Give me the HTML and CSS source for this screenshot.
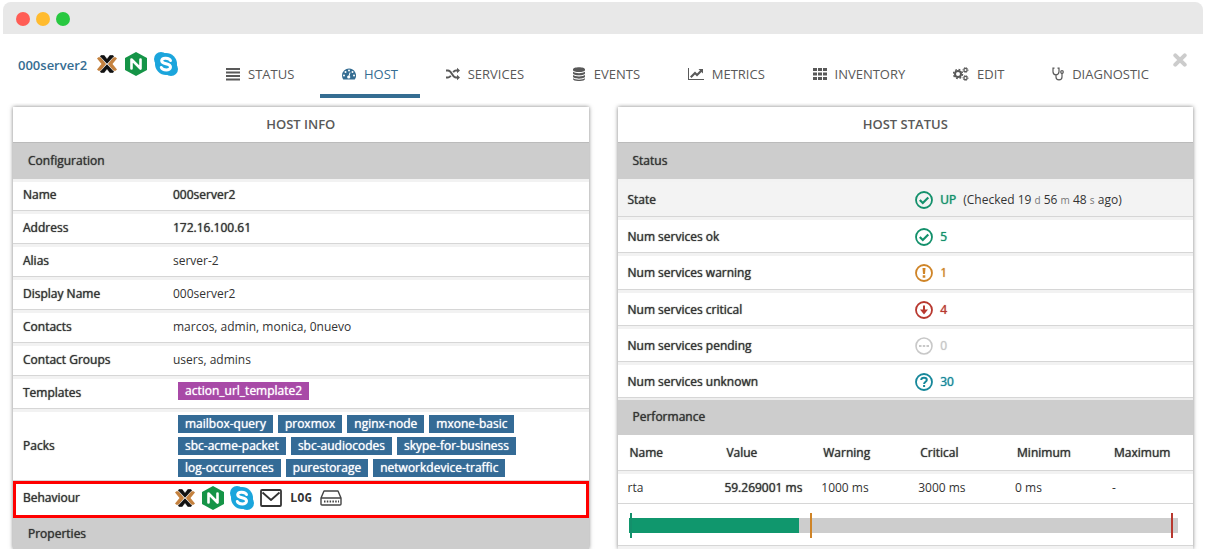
FILE: index.html
```html
<!DOCTYPE html>
<html lang="en">
<head>
<meta charset="utf-8">
<title>000server2 - Host</title>
<link rel="stylesheet" href="styles.css">
</head>
<body>
<svg class="sprite" aria-hidden="true">
  <symbol id="proxmox" viewBox="0 0 22 22">
    <path fill="#c5823f" d="M0 5l1.500-1.500h2.500L10 11l-6 7.500H1.500L0 17l5-6zM22 5l-1.500-1.500h-2.500L12 11l6 7.500h2.500L22 17l-5-6z"/>
    <path fill="#111" stroke="#fff" stroke-width=".5" d="M3 2.500L4.500 1h3.500l3 4 3-4h3.500L19 2.500l-8 8.500zM3 19.500L4.500 21h3.500l3-4 3 4h3.500l1.500-1.500L11 11z"/>
  </symbol>
  <symbol id="nginx" viewBox="0 0 22 24">
    <path fill="#159447" d="M11 0l11 6v12l-11 6L0 18V6z"/>
    <path fill="none" stroke="#fff" stroke-width="2.600" stroke-linecap="round" stroke-linejoin="round" d="M6.500 16.500v-9l9 9v-9"/>
  </symbol>
  <symbol id="skype" viewBox="0 0 24 24">
    <circle cx="12" cy="12" r="11" fill="#1ba5dc"/><circle cx="7" cy="7" r="7" fill="#1ba5dc"/><circle cx="17" cy="17" r="7" fill="#1ba5dc"/>
    <path fill="none" stroke="#fff" stroke-width="3" stroke-linecap="round" d="M16.500 8.500C15.500 6 8 4.800 7.700 8.700c0 4 8.800 2.200 8.800 6.300 0 4.200-8 3.500-9.200.5"/>
  </symbol>
  <symbol id="bars" viewBox="0 0 14 14"><path fill="currentColor" d="M0 1h14v2H0zM0 4.500h14v2H0zM0 8h14v2H0zM0 11.500h14v2H0z"/></symbol>
  <symbol id="gauge" viewBox="0 0 14 14">
    <path fill="currentColor" d="M7 1.500a7 7 0 0 0-7 7c0 1.400.4 2.700 1.100 3.800.2.200.3.200.5.200h10.800c.2 0 .400 0 .5-.2A7 7 0 0 0 7 1.500z"/>
    <g fill="#fff"><circle cx="2" cy="8.500" r="1"/><circle cx="3.500" cy="5" r="1"/><circle cx="7" cy="3.500" r="1"/><circle cx="10.500" cy="5" r="1"/><circle cx="12" cy="8.500" r="1"/><circle cx="6.700" cy="10" r="1.600"/></g>
    <path stroke="#fff" stroke-width="1" d="M6.800 10l1.200-4.500"/>
  </symbol>
  <symbol id="shuffle" viewBox="0 0 14 14">
    <path fill="none" stroke="currentColor" stroke-width="1.900" d="M0 3.500h2C6 3.500 6 10.500 10 10.500h2M0 10.500h2c1.300 0 2.100-.7 2.800-1.700M7.200 5.200C7.900 4.200 8.700 3.500 10 3.500h2"/>
    <path fill="currentColor" d="M11 .7L14 3.500l-3 2.800zM11 7.700l3 2.800-3 2.800z"/>
  </symbol>
  <symbol id="database" viewBox="0 0 14 14">
    <path fill="currentColor" d="M1 2.300C1-.6 13-.6 13 2.300v.7C13 5.700 1 5.700 1 3zM1 4.700c2 1.900 10 1.900 12 0v1.600C13 9 1 9 1 6.300zM1 8c2 1.900 10 1.900 12 0v1.600c0 2.700-12 2.700-12 0zM1 11.200c2 1.900 10 1.900 12 0V12c0 2.700-12 2.700-12 0z"/>
  </symbol>
  <symbol id="chart" viewBox="0 0 16 14">
    <path fill="currentColor" d="M0 1h1v11h15v1H0zM10.500 2H15v4.500l-1.500-1.500L9 9.500l-2-2-3.500 3.500L2 9.500l5-5 2 2 3-3z"/>
  </symbol>
  <symbol id="grid" viewBox="0 0 14 14">
    <path fill="currentColor" d="M0 1h4v3H0zM5 1h4v3H5zM10 1h4v3h-4zM0 5.500h4v3H0zM5 5.500h4v3H5zM10 5.500h4v3h-4zM0 10h4v3H0zM5 10h4v3H5zM10 10h4v3h-4z"/>
  </symbol>
  <symbol id="gears" viewBox="0 0 16 14">
    <g fill="none" stroke="currentColor">
      <circle cx="5" cy="7" r="3" stroke-width="2"/><circle cx="5" cy="7" r="4.500" stroke-width="1.500" stroke-dasharray="1.770 1.770"/>
      <circle cx="12.500" cy="3" r="1.600" stroke-width="1.200"/><circle cx="12.500" cy="3" r="2.500" stroke-width="1" stroke-dasharray="1 .960"/>
      <circle cx="12.500" cy="11" r="1.600" stroke-width="1.200"/><circle cx="12.500" cy="11" r="2.500" stroke-width="1" stroke-dasharray="1 .960"/>
    </g>
  </symbol>
  <symbol id="stethoscope" viewBox="0 0 12 14">
    <path fill="none" stroke="currentColor" stroke-width="1.200" d="M2.500 1.200H1v3.600c0 4 6 4 6 0V1.200H5.500M4 8v2c0 3.800 6 3.800 6 0V6"/>
    <circle cx="10" cy="5" r="1.300" fill="none" stroke="currentColor" stroke-width="1.200"/>
  </symbol>
  <symbol id="close" viewBox="0 0 14 14"><path stroke="currentColor" stroke-width="4" stroke-linecap="round" d="M2.300 2.300l9.400 9.400M11.700 2.300l-9.400 9.400"/></symbol>
  <symbol id="mail" viewBox="0 0 22 18"><path fill="none" stroke="#333" stroke-width="1.800" stroke-linejoin="round" d="M2 1h18q1 0 1 1v14q0 1-1 1H2q-1 0-1-1V2q0-1 1-1zM2.500 3.500L11 11l8.500-7.500"/></symbol>
  <symbol id="device" viewBox="0 0 22 16">
    <path fill="none" stroke="#444" stroke-width="1.400" stroke-linejoin="round" d="M4 1h14l3 7v6q0 1-1 1H2q-1 0-1-1V8zM1.500 8h19"/>
    <path stroke="#444" stroke-width="1.800" stroke-dasharray="1.500 1.300" d="M4 11.500h15"/>
  </symbol>
  <symbol id="ok" viewBox="0 0 18 18"><g fill="none" stroke="currentColor"><circle cx="9" cy="9" r="8" stroke-width="1.800"/><path stroke-width="2.200" d="M4.800 9l3 3 5.500-5.500"/></g></symbol>
  <symbol id="warning" viewBox="0 0 18 18"><circle cx="9" cy="9" r="8" fill="none" stroke="currentColor" stroke-width="1.800"/><path fill="currentColor" d="M7.500 4h3L10 10H8zM7.700 11.300h2.600v2.400H7.700z"/></symbol>
  <symbol id="critical" viewBox="0 0 18 18"><circle cx="9" cy="9" r="8" fill="none" stroke="currentColor" stroke-width="1.800"/><path fill="currentColor" d="M8 4.500h2v4h3L9 13.500l-4-5h3z"/></symbol>
  <symbol id="pending" viewBox="0 0 18 18"><circle cx="9" cy="9" r="8" fill="none" stroke="currentColor" stroke-width="1.600"/><path fill="currentColor" d="M4 8h2.500v2H4zM7.800 8h2.400v2H7.800zM11.500 8H14v2h-2.500z"/></symbol>
  <symbol id="unknown" viewBox="0 0 18 18"><g fill="none" stroke="currentColor"><circle cx="9" cy="9" r="8" stroke-width="1.800"/><path stroke-width="2" d="M6.200 7c.2-3 5.600-2.800 5.600 0 0 1.700-2.700 1.800-2.700 4M9.100 12v2"/></g></symbol>
</svg>

<div class="window">
  <div class="titlebar"><span class="dot dot-red"></span><span class="dot dot-amber"></span><span class="dot dot-green"></span></div>

  <header class="header">
    <div class="host">
      <h1 class="host-name">000server2</h1>
      <div class="logos">
        <svg class="logo-proxmox"><use href="#proxmox"/></svg>
        <svg class="logo-nginx"><use href="#nginx"/></svg>
        <svg class="logo-skype"><use href="#skype"/></svg>
      </div>
    </div>
    <nav class="tabs">
      <a class="tab" href="#status"><svg class="tab-icon"><use href="#bars"/></svg>STATUS</a>
      <a class="tab tab-active" href="#host"><svg class="tab-icon"><use href="#gauge"/></svg>HOST</a>
      <a class="tab" href="#services"><svg class="tab-icon"><use href="#shuffle"/></svg>SERVICES</a>
      <a class="tab" href="#events"><svg class="tab-icon"><use href="#database"/></svg>EVENTS</a>
      <a class="tab" href="#metrics"><svg class="tab-icon tab-icon-wide"><use href="#chart"/></svg>METRICS</a>
      <a class="tab" href="#inventory"><svg class="tab-icon"><use href="#grid"/></svg>INVENTORY</a>
      <a class="tab" href="#edit"><svg class="tab-icon tab-icon-wide"><use href="#gears"/></svg>EDIT</a>
      <a class="tab" href="#diagnostic"><svg class="tab-icon tab-icon-narrow"><use href="#stethoscope"/></svg>DIAGNOSTIC</a>
    </nav>
    <button class="close" type="button" aria-label="Close"><svg class="close-icon"><use href="#close"/></svg></button>
  </header>

  <main class="panels">
    <section class="panel">
      <h2 class="panel-title">HOST INFO</h2>
      <h3 class="section">Configuration</h3>
      <table class="info">
        <tr><th scope="row">Name</th><td><b>000server2</b></td></tr>
        <tr><th scope="row">Address</th><td><b>172.16.100.61</b></td></tr>
        <tr><th scope="row">Alias</th><td>server-2</td></tr>
        <tr><th scope="row">Display Name</th><td>000server2</td></tr>
        <tr><th scope="row">Contacts</th><td>marcos, admin, monica, 0nuevo</td></tr>
        <tr><th scope="row">Contact Groups</th><td>users, admins</td></tr>
        <tr class="templates"><th scope="row">Templates</th><td><div class="tags"><span class="tag tag-template">action_url_template2</span></div></td></tr>
        <tr class="packs"><th scope="row">Packs</th><td>
          <div class="tags"><span class="tag">mailbox-query</span><span class="tag">proxmox</span><span class="tag">nginx-node</span><span class="tag">mxone-basic</span></div>
          <div class="tags"><span class="tag">sbc-acme-packet</span><span class="tag">sbc-audiocodes</span><span class="tag">skype-for-business</span></div>
          <div class="tags"><span class="tag">log-occurrences</span><span class="tag">purestorage</span><span class="tag">networkdevice-traffic</span></div>
        </td></tr>
        <tr class="highlight"><th scope="row">Behaviour</th><td><div class="logos logos-row">
          <svg class="logo-proxmox"><use href="#proxmox"/></svg>
          <svg class="logo-nginx"><use href="#nginx"/></svg>
          <svg class="logo-skype"><use href="#skype"/></svg>
          <svg class="logo-mail"><use href="#mail"/></svg>
          <span class="log">LOG</span>
          <svg class="logo-device"><use href="#device"/></svg>
        </div></td></tr>
      </table>
      <h3 class="section section-last">Properties</h3>
    </section>

    <section class="panel">
      <h2 class="panel-title">HOST STATUS</h2>
      <h3 class="section">Status</h3>
      <table class="status">
        <tr class="state"><th scope="row">State</th><td><div class="value ok"><svg class="badge"><use href="#ok"/></svg><b>UP</b><span class="checked">(Checked 19 <small>d</small> 56 <small>m</small> 48 <small>s</small> ago)</span></div></td></tr>
        <tr><th scope="row">Num services ok</th><td><div class="value ok"><svg class="badge"><use href="#ok"/></svg><b>5</b></div></td></tr>
        <tr><th scope="row">Num services warning</th><td><div class="value warning"><svg class="badge"><use href="#warning"/></svg><b>1</b></div></td></tr>
        <tr><th scope="row">Num services critical</th><td><div class="value critical"><svg class="badge"><use href="#critical"/></svg><b>4</b></div></td></tr>
        <tr><th scope="row">Num services pending</th><td><div class="value pending"><svg class="badge"><use href="#pending"/></svg><b>0</b></div></td></tr>
        <tr><th scope="row">Num services unknown</th><td><div class="value unknown"><svg class="badge"><use href="#unknown"/></svg><b>30</b></div></td></tr>
      </table>
      <h3 class="section section-performance">Performance</h3>
      <table class="perf">
        <tr class="perf-head"><th>Name</th><th>Value</th><th>Warning</th><th>Critical</th><th>Minimum</th><th class="perf-last">Maximum</th></tr>
        <tr><td>rta</td><td><b>59.269001 ms</b></td><td>1000 ms</td><td>3000 ms</td><td>0 ms</td><td>-</td></tr>
      </table>
      <div class="meter-row">
        <div class="meter">
          <div class="meter-fill" style="width:31.1%"></div>
          <span class="mark mark-ok" style="left:0.3%"></span>
          <span class="mark mark-warning" style="left:33.1%"></span>
          <span class="mark mark-critical" style="left:98.800%"></span>
        </div>
      </div>
      <div class="row-edge"></div>
    </section>
  </main>
</div>
</body>
</html>
```
FILE: styles.css
```css
* { box-sizing: border-box; }
body {
  margin: 0;
  padding: 2px 3px;
  background: #fff;
  color: #333;
  font: 12px/16px "Open Sans", "Noto Sans", sans-serif;
}
h1, h2 { margin: 0; font-weight: 600; }
h3, th, b, .tag { margin: 0; font-weight: 400; text-shadow: 0 0 1px currentColor; }
svg { display: block; flex: none; }
.sprite { position: absolute; width: 0; height: 0; }

.titlebar {
  display: flex;
  align-items: center;
  gap: 6px;
  height: 32px;
  padding: 2px 13px 0;
  border-radius: 8px 8px 0 0;
  background: #e8e8e8;
}
.dot { width: 14px; height: 14px; border-radius: 50%; }
.dot-red { background: #ff5d55; }
.dot-amber { background: #ffbb2e; }
.dot-green { background: #28c840; }

.header { display: flex; align-items: flex-start; height: 64px; padding: 0 15px; }
.host { display: flex; align-items: center; flex: none; width: 186px; height: 60px; gap: 9px; }
.host-name { padding-top: 2px; color: #356d92; font-size: 13px; line-height: 20px; }
.logos { display: flex; align-items: center; gap: 7px; }
.logo-proxmox { width: 22px; height: 20px; }
.logo-nginx { width: 22px; height: 24px; }
.logo-skype { width: 24px; height: 24px; }
.logo-mail { width: 22px; height: 18px; }
.logo-device { width: 22px; height: 16px; }
.log { padding: 0 2px; font: bold 12px/16px "DejaVu Sans Mono", monospace; }

.tabs { display: flex; flex: 1; justify-content: space-between; height: 64px; }
.tab {
  display: flex;
  align-items: center;
  gap: 8px;
  padding: 20px 22px 0;
  border-bottom: 4px solid transparent;
  color: #595959;
  font-size: 13px;
  line-height: 20px;
  text-decoration: none;
}
.tab-icon { width: 14px; height: 14px; }
.tab-icon-wide { width: 16px; }
.tab-icon-narrow { width: 12px; }
.tab-active { border-color: #356d92; color: #356d92; }
.close { margin: 19px 0 0; padding: 0 13px 0 2px; border: 0; background: none; color: #ccc; }
.header { padding-right: 0; }
.close-icon { width: 14px; height: 14px; margin-right: 3px; }

.panels { display: grid; grid-template-columns: 1fr 1fr; gap: 29px; padding: 9px 10px 0; }
.panel { background: #fff; box-shadow: 0 0 4px rgba(0, 0, 0, .5); clip-path: inset(-4px -8px 0 -8px); }
.panel-title {
  height: 36px;
  border-bottom: 1px solid #bbb;
  color: #595959;
  font-size: 13px;
  line-height: 34px;
  text-align: center;
}
.section { height: 36px; padding: 0 15px; background: #cdcdcd; font-size: 12px; line-height: 35px; }
.section-last { height: 31px; line-height: 32px; }
.section-performance { height: 37px; border-top: 2px solid #eee; line-height: 34px; }

table { width: 100%; border-collapse: separate; border-spacing: 0; table-layout: fixed; }
th { text-align: left; }
th, td { padding: 0 10px; border-top: 3px solid #f2f2f2; border-bottom: 1px solid #d6d6d6; }
.info th, .info td { padding-bottom: 2px; }
.info th { width: 150px; }
.info tr { height: 33px; }
.info tr:first-child { height: 32px; }
.info .templates td { padding-bottom: 5px; }
.info .packs { height: 72px; }
.info .packs th, .info .packs td { padding-bottom: 0; }
.tags { display: flex; gap: 5px; padding: 0 5px; }
.tags + .tags { margin-top: 4px; }
.tag { padding: 0 7px; background: #346b96; color: #fff; line-height: 18px; white-space: nowrap; }
.tag-template { background: #a84aa7; }
.info .highlight { height: 37px; outline: 3px solid #f00; outline-offset: -3px; }
.info .highlight th, .info .highlight td { padding-bottom: 6px; }
.logos-row { gap: 6px; padding-left: 1px; }

.status th { width: 50%; }
.status th, .status td { padding-top: 1px; }
.status tr { height: 36px; }
.status tr:nth-child(3) { height: 37px; }
.status .state { height: 38px; background: #f3f3f3; }
.value { display: flex; align-items: center; gap: 7px; }
.badge { width: 18px; height: 18px; }
.ok { color: #13906b; }
.warning { color: #cf8427; }
.critical { color: #b8382f; }
.pending { color: #c8c8c8; }
.unknown { color: #16879a; }
.checked { color: #333; }
.checked small { color: #777; font-size: 10px; }

.perf tr { height: 33px; }
.perf .perf-head { height: 36px; }
.perf .perf-head th { padding: 0 0 0 12px; border-top: 0; }
.perf .perf-last { width: 91px; }
.perf td { padding-right: 0; padding-bottom: 2px; }
.meter-row { padding: 14px 15px 12px 11px; border-bottom: 1px solid #d6d6d6; }
.meter { position: relative; height: 15px; background: #cdcdcd; }
.meter-fill { height: 100%; background: #10976d; }
.mark { position: absolute; top: -5px; bottom: -5px; width: 2px; }
.mark-ok { background: #13906b; }
.mark-warning { background: #cf8427; }
.mark-critical { background: #b8382f; }
.row-edge { height: 3px; background: #f2f2f2; }
```
